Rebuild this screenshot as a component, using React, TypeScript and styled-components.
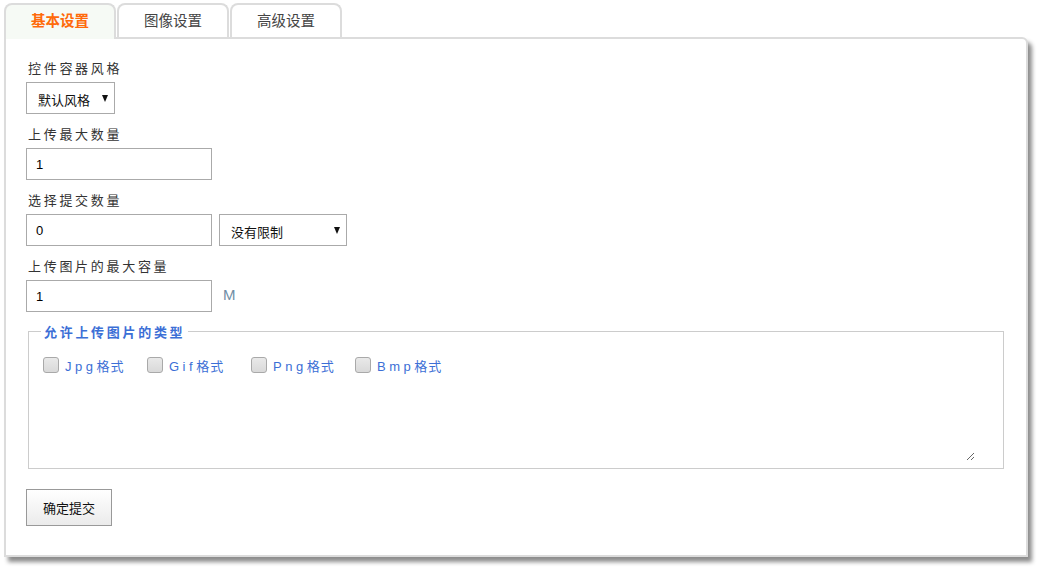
import React from "react";
import styled, { createGlobalStyle, css } from "styled-components";

const GlobalStyle = createGlobalStyle`
  body {
    margin: 0;
    background: #fff;
    font-family: "Liberation Sans", "Noto Sans CJK SC", sans-serif;
    color: #333;
  }
`;

const tabs = ["基本设置", "图像设置", "高级设置"];
const types = ["Jpg", "Gif", "Png", "Bmp"];

const App = () => {
  return (
    <>
      <GlobalStyle />
      <Page>
        <TabBar>
          {tabs.map((t, i) => (
            <Tab key={t} active={i === 0}>
              {t}
            </Tab>
          ))}
        </TabBar>

        <Panel>
          <Field>
            <Label>控件容器风格</Label>
            <SelectWrap width={89}>
              <Select defaultValue="默认风格">
                <option>默认风格</option>
              </Select>
            </SelectWrap>
          </Field>

          <Field>
            <Label>上传最大数量</Label>
            <Input defaultValue="1" />
          </Field>

          <Field>
            <Label>选择提交数量</Label>
            <Row>
              <Input defaultValue="0" />
              <SelectWrap width={128}>
                <Select defaultValue="没有限制">
                  <option>没有限制</option>
                </Select>
              </SelectWrap>
            </Row>
          </Field>

          <Field>
            <Label>上传图片的最大容量</Label>
            <Row>
              <Input defaultValue="1" />
              <Unit>M</Unit>
            </Row>
          </Field>

          <TypeSet>
            <Legend>允许上传图片的类型</Legend>
            <CheckRow>
              {types.map((t) => (
                <CheckItem key={t}>
                  <Check type="checkbox" />
                  <CheckText>
                    <Ext>{t}</Ext>格式
                  </CheckText>
                </CheckItem>
              ))}
            </CheckRow>
            <Notes />
          </TypeSet>

          <Submit>确定提交</Submit>
        </Panel>
      </Page>
    </>
  );
};

export default App;

const Page = styled.div`
  padding: 3px 0 15px 4px;
  width: 1024px;
`;

const TabBar = styled.div`
  display: flex;
  gap: 1px;
  height: 34px;
  align-items: flex-start;
`;

const Tab = styled.div<{ active?: boolean }>`
  width: 112px;
  height: 34px;
  box-sizing: border-box;
  border: 2px solid #dcdcdc;
  border-bottom: none;
  border-radius: 8px 8px 0 0;
  background: #fff;
  padding-top: 5px;
  line-height: 20px;
  text-align: center;
  font-family: "Noto Sans CJK SC", sans-serif;
  font-size: 14.5px;
  color: #444;
  ${(p) =>
    p.active &&
    css`
      position: relative;
      z-index: 1;
      height: 36px;
      background: #f6faf5;
      color: #ff6a0a;
      font-weight: bold;
    `}
`;

const Panel = styled.div`
  border: 2px solid #dcdcdc;
  border-radius: 0 6px 0 0;
  background: #fff;
  box-shadow: 4px 5px 4px rgba(0, 0, 0, 0.45);
  padding: 19px 22px 29px 20px;
  height: 520px;
  box-sizing: border-box;
`;

const Field = styled.div`
  display: flex;
  flex-direction: column;
  align-items: flex-start;
  gap: 4px;
  margin-bottom: 10px;
`;

const Label = styled.label`
  font-family: "Noto Sans CJK SC", sans-serif;
  font-size: 13px;
  line-height: 20px;
  letter-spacing: 2.7px;
  padding-left: 2px;
  color: #333;
`;

const Row = styled.div`
  display: flex;
  align-items: center;
  gap: 7px;
`;

const Input = styled.input`
  width: 186px;
  height: 32px;
  box-sizing: border-box;
  border: 1px solid #aaa;
  padding: 0 9px;
  font-family: "Liberation Sans", sans-serif;
  font-size: 13px;
  color: #000;
  outline: none;
`;

const SelectWrap = styled.div<{ width: number }>`
  position: relative;
  width: ${(p) => p.width}px;
  &::after {
    content: "";
    position: absolute;
    right: 7px;
    top: 50%;
    margin-top: -3px;
    border-left: 3.5px solid transparent;
    border-right: 3.5px solid transparent;
    border-top: 7px solid #111;
    pointer-events: none;
  }
`;

const Select = styled.select`
  appearance: none;
  width: 100%;
  height: 32px;
  box-sizing: border-box;
  border: 1px solid #aaa;
  background: #fff;
  padding: 2px 20px 0 11px;
  font-family: "Noto Sans CJK SC", sans-serif;
  font-size: 13px;
  color: #111;
  border-radius: 0;
  outline: none;
`;

const Unit = styled.span`
  font-family: "Liberation Sans", sans-serif;
  font-size: 15px;
  color: #6f8ea6;
  margin: 0 0 4px 4px;
`;

const TypeSet = styled.fieldset`
  margin: 9px 0 20px 2px;
  border: 1px solid #ccc;
  padding: 0 14px 7px;
  min-width: 0;
`;

const Legend = styled.legend`
  padding: 0 3px;
  margin-left: -2px;
  font-family: "Noto Sans CJK SC", sans-serif;
  font-size: 13px;
  font-weight: bold;
  letter-spacing: 2.7px;
  color: #3c6fd6;
`;

const CheckRow = styled.div`
  display: flex;
  height: 20px;
  margin-top: 14px;
`;

const CheckItem = styled.label`
  display: flex;
  align-items: center;
  gap: 6px;
  width: 104px;
`;

const Check = styled.input`
  appearance: none;
  margin: 0;
  width: 16px;
  height: 16px;
  border: 1px solid #a9a9a9;
  border-radius: 3px;
  background: linear-gradient(#e9e9e9, #d9d9d9);
  box-sizing: border-box;
`;

const CheckText = styled.span`
  font-family: "Noto Sans CJK SC", sans-serif;
  font-size: 13px;
  letter-spacing: 1px;
  color: #3c6fd6;
`;

const Ext = styled.span`
  font-family: "Liberation Sans", sans-serif;
  letter-spacing: 3.5px;
`;

const Notes = styled.textarea`
  display: block;
  border: none;
  outline: none;
  width: calc(100% - 14px);
  height: 82px;
  margin-top: 4px;
  box-sizing: border-box;
  resize: both;
`;

const Submit = styled.button`
  width: 86px;
  height: 37px;
  border: 1px solid #999;
  border-radius: 0;
  background: linear-gradient(#ffffff, #ebebeb);
  font-family: "Noto Sans CJK SC", sans-serif;
  font-size: 13px;
  color: #111;
  padding: 0;
`;
